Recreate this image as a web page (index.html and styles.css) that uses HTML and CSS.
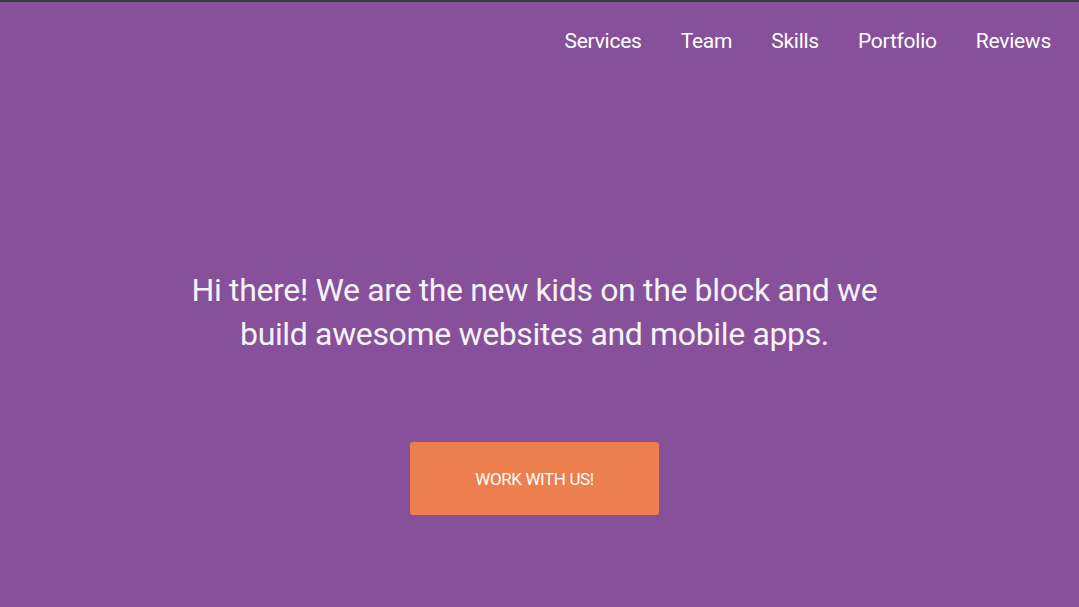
FILE: index.html
```html
<!DOCTYPE html>
<html>
<head>
<meta charset="utf-8">
<link rel="stylesheet" href="styles.css">
</head>
<body>
<div class="page">
  <nav class="nav">
    <a href="#">Services</a>
    <a href="#">Team</a>
    <a href="#">Skills</a>
    <a href="#">Portfolio</a>
    <a href="#">Reviews</a>
  </nav>
  <section class="hero">
    <h1 class="hero-title">Hi there! We are the new kids on the block and we<br>build awesome websites and mobile apps.</h1>
    <a class="btn" href="#">WORK WITH US!</a>
  </section>
</div>
</body>
</html>
```
FILE: styles.css
```css
html, body {
  margin: 0;
  padding: 0;
  height: 100%;
}
body {
  background: #87509a;
  font-family: Roboto, "Noto Sans", sans-serif;
  color: #fff;
  overflow: hidden;
}
.page {
  border-top: 2px solid #3a3a3a;
  height: 605px;
  display: flex;
  flex-direction: column;
}
.nav {
  display: flex;
  justify-content: flex-end;
  gap: 39px;
  padding: 26px 28px 0 0;
  font-size: 21px;
  line-height: 26px;
}
.nav a {
  color: #fff;
  text-decoration: none;
  letter-spacing: -0.25px;
}
.hero {
  display: flex;
  flex-direction: column;
  align-items: center;
  padding: 214px 10px 0 0;
}
.hero-title {
  margin: 0;
  text-align: center;
  font-weight: 400;
  font-size: 32px;
  line-height: 44px;
  letter-spacing: -0.35px;
  color: #f7f2f8;
}
.btn {
  margin-top: 86px;
  width: 249px;
  height: 73px;
  display: flex;
  align-items: center;
  justify-content: center;
  background: #ec7f4d;
  border-radius: 3px;
  color: #fff;
  text-decoration: none;
  font-size: 17px;
  letter-spacing: -0.4px;
}
```
